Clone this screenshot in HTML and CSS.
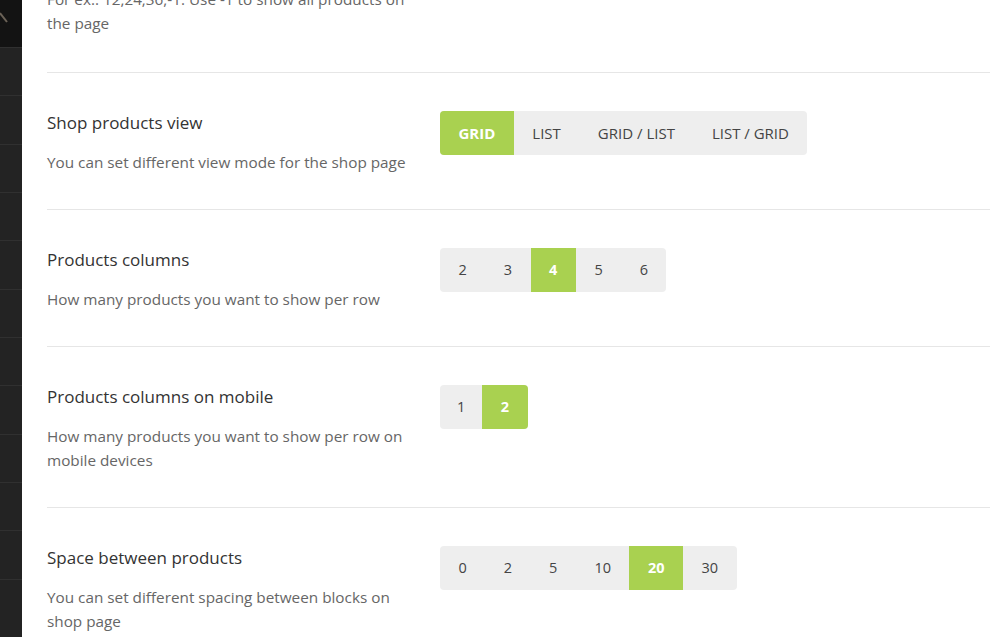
FILE: index.html
```html
<!DOCTYPE html>
<html>
<head>
<meta charset="utf-8">
<link rel="stylesheet" href="styles.css">
</head>
<body>
<div class="app">
  <aside class="sidebar">
    <div class="sidebar-top">
      <svg class="arrow" width="10" height="30" viewBox="0 0 10 30"><path d="M0 13 L7 22" stroke="#6b6257" stroke-width="2" fill="none"/></svg>
    </div>
    <div class="side-item"></div><div class="side-item"></div><div class="side-item"></div>
    <div class="side-item"></div><div class="side-item"></div><div class="side-item"></div>
    <div class="side-item"></div><div class="side-item"></div><div class="side-item"></div>
    <div class="side-item"></div><div class="side-item"></div><div class="side-item"></div>
  </aside>
  <main class="main">
    <section class="option first">
      <div class="info">
        <p class="desc">For ex.: 12,24,36,-1. Use -1 to show all products on the page</p>
      </div>
    </section>
    <section class="option">
      <div class="info">
        <h3 class="title">Shop products view</h3>
        <p class="desc">You can set different view mode for the shop page</p>
      </div>
      <div class="group">
        <span class="btn active">GRID</span>
        <span class="btn">LIST</span>
        <span class="btn">GRID / LIST</span>
        <span class="btn">LIST / GRID</span>
      </div>
    </section>
    <section class="option">
      <div class="info">
        <h3 class="title">Products columns</h3>
        <p class="desc">How many products you want to show per row</p>
      </div>
      <div class="group">
        <span class="btn num">2</span>
        <span class="btn num">3</span>
        <span class="btn num active">4</span>
        <span class="btn num">5</span>
        <span class="btn num">6</span>
      </div>
    </section>
    <section class="option">
      <div class="info">
        <h3 class="title">Products columns on mobile</h3>
        <p class="desc">How many products you want to show per row on mobile devices</p>
      </div>
      <div class="group">
        <span class="btn num narrow">1</span>
        <span class="btn num active">2</span>
      </div>
    </section>
    <section class="option">
      <div class="info">
        <h3 class="title">Space between products</h3>
        <p class="desc">You can set different spacing between blocks on shop page</p>
      </div>
      <div class="group">
        <span class="btn num">0</span>
        <span class="btn num">2</span>
        <span class="btn num">5</span>
        <span class="btn num">10</span>
        <span class="btn num active">20</span>
        <span class="btn num">30</span>
      </div>
    </section>
  </main>
</div>
</body>
</html>
```
FILE: styles.css
```css
* { box-sizing: border-box; }
html, body {
  margin: 0;
  padding: 0;
  height: 100%;
  overflow: hidden;
  background: #fff;
  font-family: "Open Sans", "Noto Sans", sans-serif;
}
.app {
  display: flex;
  height: 637px;
  overflow: hidden;
}
.sidebar {
  width: 22px;
  flex: none;
  background: #232323;
  display: flex;
  flex-direction: column;
}
.sidebar-top {
  height: 47px;
  flex: none;
  background: #131313;
}
.arrow { display: block; }
.side-item {
  height: 48.33px;
  flex: none;
  border-top: 1px solid #303030;
  background: #232323;
}
.main {
  flex: 1;
  padding-left: 25px;
}
.option {
  display: flex;
  align-items: flex-start;
  border-top: 1px solid #e6e6e6;
  padding: 38px 0 35px;
}
.option.first {
  border-top: none;
  padding: 0 0 37px;
  margin-top: -13px;
}
.info {
  width: 393px;
  flex: none;
  padding-right: 26px;
}
.title {
  margin: 0 0 15px;
  font-size: 17px;
  line-height: 24px;
  font-weight: 500;
  color: #333;
}
.desc {
  margin: 0;
  font-size: 15.3px;
  line-height: 24px;
  color: #666;
}
.group {
  display: flex;
  background: #eeeeee;
  border-radius: 4px;
  overflow: hidden;
}
.btn {
  display: block;
  height: 44px;
  line-height: 44px;
  padding: 0 18.5px;
  font-size: 15px;
  color: #444;
}
.btn.num {
  text-align: center;
  font-size: 14.5px;
  padding: 0 18.5px;
}
.btn.narrow {
  padding: 0 17px;
}
.btn.active {
  background: #a9d150;
  color: #fff;
  font-weight: 700;
}
```
